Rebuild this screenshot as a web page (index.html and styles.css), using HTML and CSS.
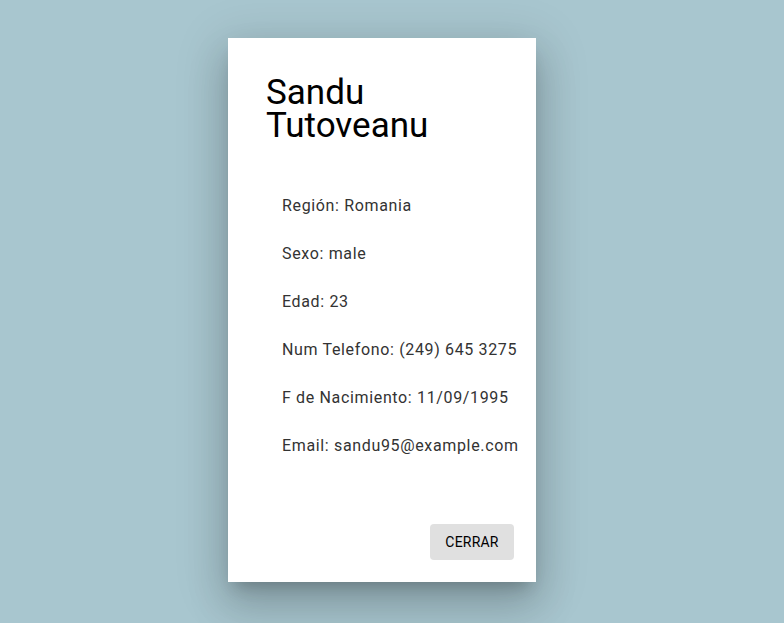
FILE: index.html
```html
<!DOCTYPE html>
<html lang="es">
<head>
<meta charset="utf-8">
<title>Sandu Tutoveanu</title>
<link rel="stylesheet" href="styles.css">
</head>
<body>
<div class="card">
  <h2 class="title">Sandu Tutoveanu</h2>
  <ul class="info">
    <li>Región: Romania</li>
    <li>Sexo: male</li>
    <li>Edad: 23</li>
    <li>Num Telefono: (249) 645 3275</li>
    <li>F de Nacimiento: 11/09/1995</li>
    <li>Email: sandu95@example.com</li>
  </ul>
  <div class="actions">
    <button class="btn">CERRAR</button>
  </div>
</div>
</body>
</html>
```
FILE: styles.css
```css
html, body {
  margin: 0;
  padding: 0;
  height: 100%;
}
body {
  background: #a8c6cf;
  font-family: Roboto, "Liberation Sans", sans-serif;
}
.card {
  box-sizing: border-box;
  width: 308px;
  height: 544px;
  margin: 38px 0 0 228px;
  background: #fff;
  display: flex;
  flex-direction: column;
  box-shadow: 0 11px 15px -7px rgba(0,0,0,0.2), 0 24px 38px 3px rgba(0,0,0,0.14), 0 9px 46px 8px rgba(0,0,0,0.12);
}
.title {
  margin: 0;
  padding: 38px 38px 0 38px;
  font-weight: 400;
  font-size: 35px;
  line-height: 33px;
  color: #000;
  width: 170px;
}
.info {
  list-style: none;
  margin: 0;
  padding: 40px 0 0 54px;
  flex: 1;
}
.info li {
  font-size: 16px;
  line-height: 48px;
  letter-spacing: 0.65px;
  color: #333;
}
.actions {
  display: flex;
  justify-content: flex-end;
  padding: 0 22px 22px 0;
}
.btn {
  width: 84px;
  height: 36px;
  border: none;
  border-radius: 4px;
  background: #e0e0e0;
  font-family: Roboto, "Liberation Sans", sans-serif;
  font-size: 14px;
  font-weight: 400;
  color: #000;
  letter-spacing: 0.2px;
  padding: 0;
}
```
